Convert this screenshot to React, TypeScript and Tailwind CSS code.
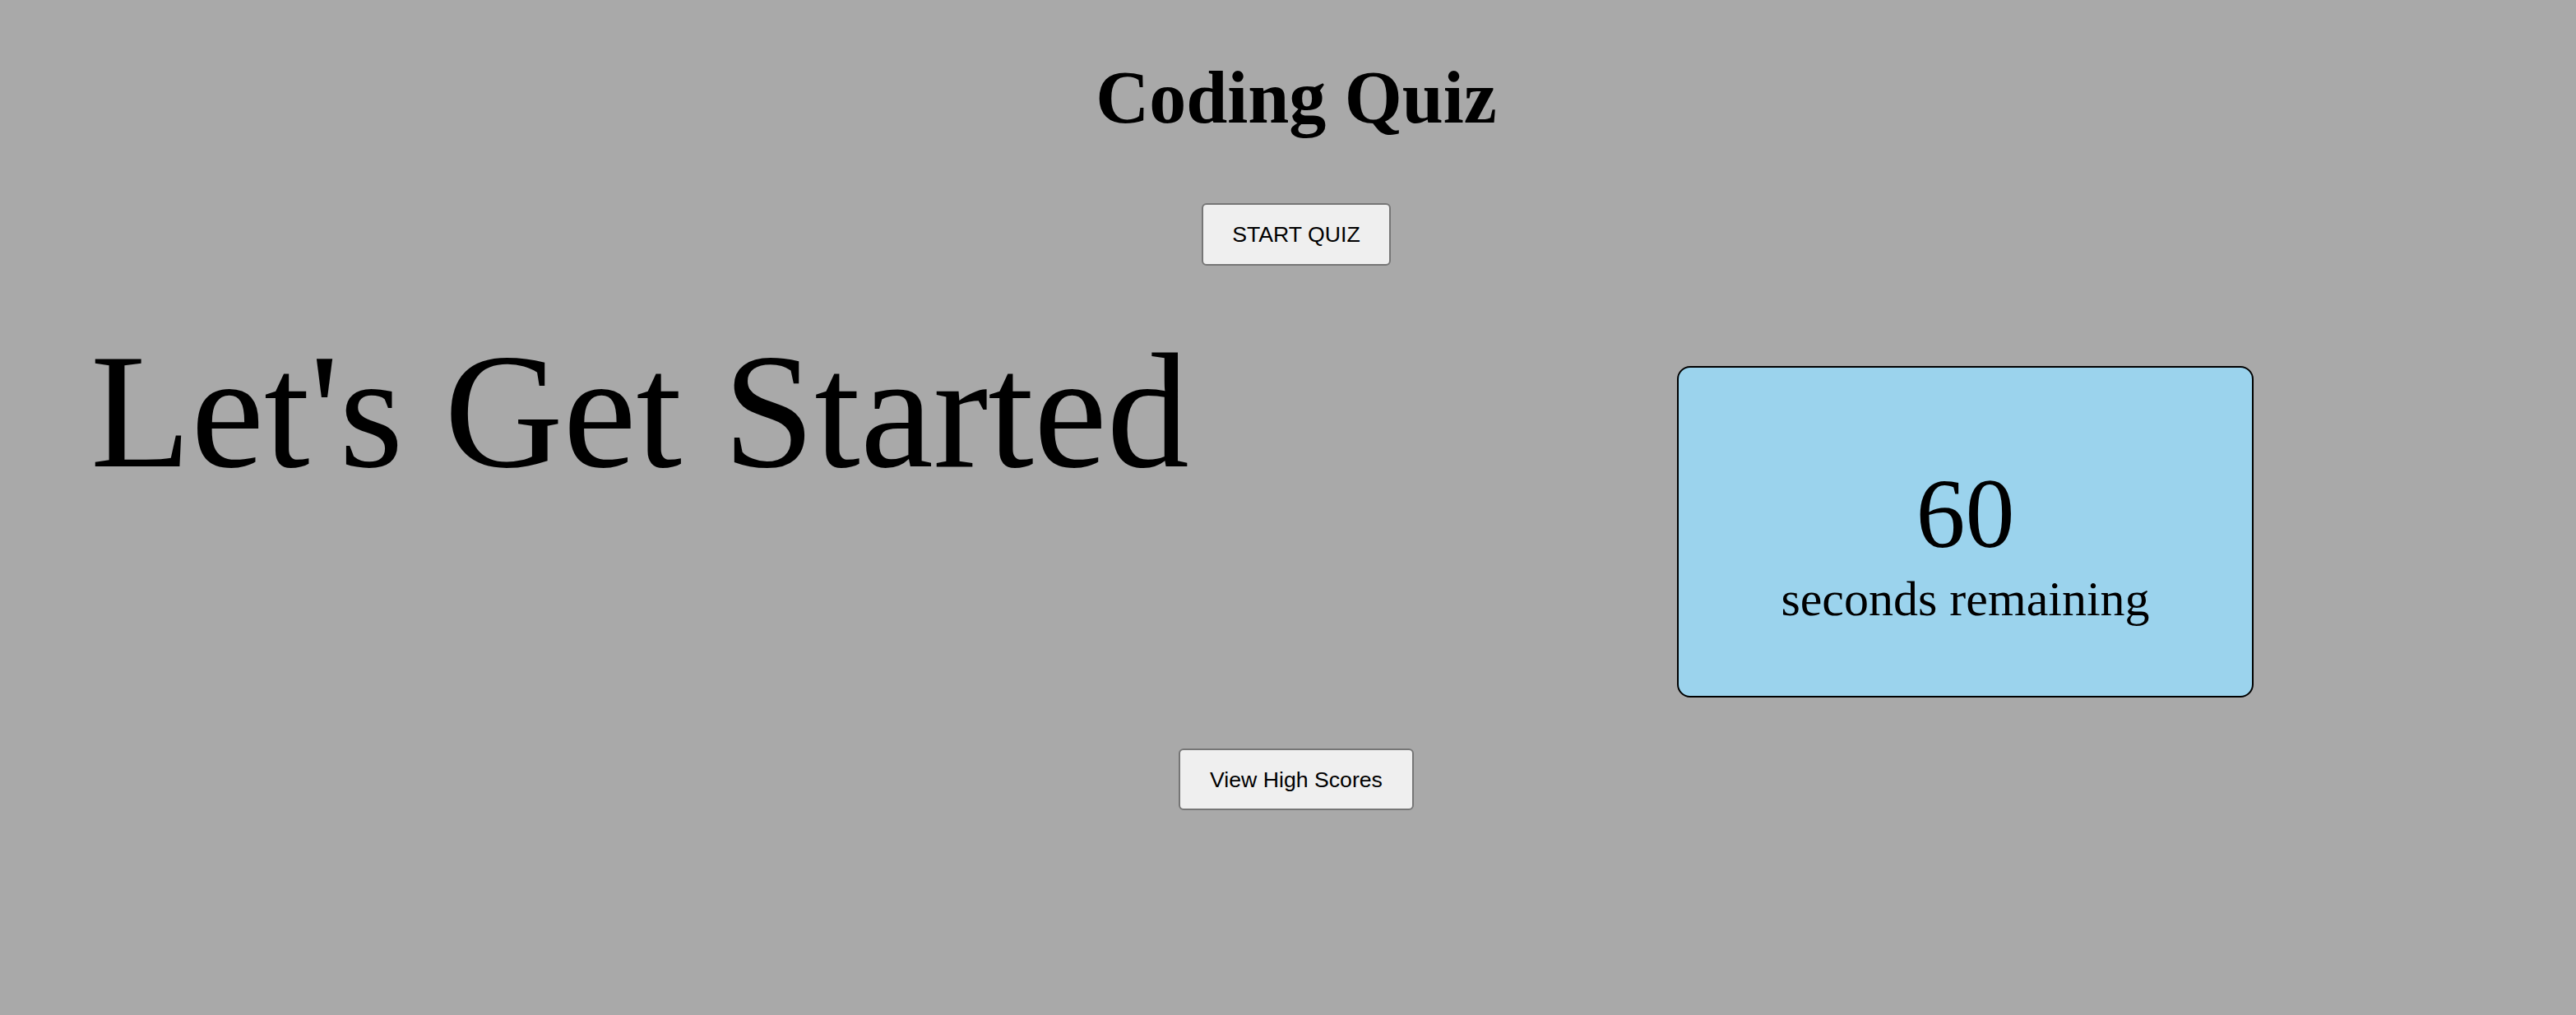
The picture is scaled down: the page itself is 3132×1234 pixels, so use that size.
export default function App() {
  const serif = { fontFamily: '"Liberation Serif", "Times New Roman", serif' };
  const sans = { fontFamily: '"Liberation Sans", Arial, sans-serif' };
  return (
    <div className="min-h-[1234px] w-full bg-[#a9a9a9] text-black" style={serif}>
      <div className="flex flex-col items-center pl-[20px]">
        <h1 className="mt-[74px] text-[90px] font-bold leading-none">Coding Quiz</h1>
        <button
          className="mt-[83px] flex h-[76px] w-[230px] items-center justify-center rounded-[6px] border-2 border-[#767676] bg-[#efefef] text-[26.67px] text-black"
          style={sans}
        >
          START QUIZ
        </button>
      </div>
      <div className="mt-[72px] flex items-start pl-[110px]">
        <div className="mt-[5px] w-[1929px] text-[200px] leading-none">Let's Get Started</div>
        <div className="mt-[50px] flex h-[403px] w-[701px] flex-col items-center rounded-[16px] border-2 border-black bg-[#9bd3ed] pt-[118px]">
          <div className="text-[120px] leading-none">60</div>
          <div className="mt-[13px] text-[60px] leading-none">seconds remaining</div>
        </div>
      </div>
      <div className="mt-[62px] flex justify-center pl-[20px]">
        <button
          className="flex h-[75px] w-[286px] items-center justify-center rounded-[6px] border-2 border-[#767676] bg-[#efefef] text-[26.67px] text-black"
          style={sans}
        >
          View High Scores
        </button>
      </div>
    </div>
  );
}
